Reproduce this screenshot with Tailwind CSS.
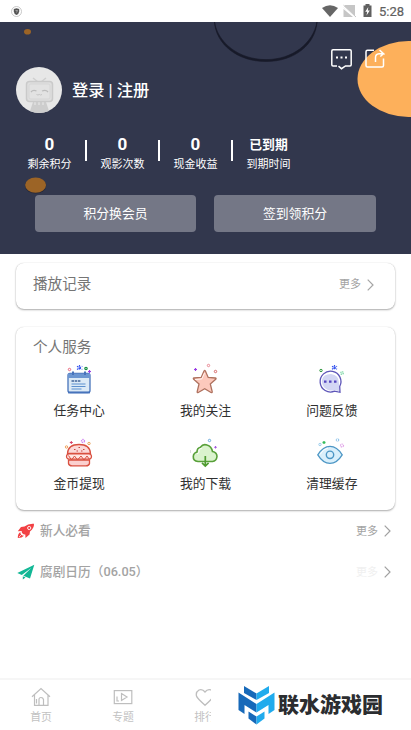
<!DOCTYPE html>
<html lang="zh-CN">
<head>
<meta charset="utf-8">
<title>我的</title>
<script src="https://cdn.jsdelivr.net/npm/@tailwindcss/browser@4"></script>
</head>
<body class="bg-white font-[Roboto,'Noto_Sans_CJK_SC',sans-serif]">
<div class="relative flex h-[730px] w-[411px] flex-col overflow-hidden bg-white">
  <!-- status bar -->
  <div class="flex h-[22px] shrink-0 items-center justify-between pl-[11px] pr-[7px]">
    <svg class="size-[11px]" viewBox="0 0 11 11"><circle cx="5.5" cy="5.5" r="5" fill="#fff" stroke="#bbb" stroke-width=".8"/><path d="M2.8 3L5.5 2.2 8.2 3V5.5Q8 8 5.5 9Q3 8 2.8 5.5Z" fill="#555"/><path d="M4.5 4.5H6.5L5.5 6.5" fill="none" stroke="#bbb" stroke-width=".7"/></svg>
    <div class="flex items-center">
      <svg class="h-[14px] w-[60px]" viewBox="0 0 60 14"><path d="M1 4Q9-1.500 17 4L9 13Z" fill="#666"/><path d="M24 1H34V12.500L22.500 3.500Z" fill="#c6c6c6"/><path d="M22.500 5V13H32Z" fill="#c6c6c6"/><path d="M22 2L35 13.500" stroke="#fff" stroke-width="1.600"/><path d="M22.500 1.200L35 13" stroke="#c6c6c6"/><path d="M42.500 1.500H44.500V0H48.500V1.500H50.500V13H42.500Z" fill="#606060"/><path d="M47.300 3L44.200 7.800H46.200L45.500 11.500L48.800 6.500H46.800Z" fill="#fff"/></svg>
      <span class="-ml-[2px] mt-[1px] text-[13px] leading-none text-[#606060] [-webkit-text-stroke:0.2px_#606060]">5:28</span>
    </div>
  </div>

  <!-- profile header -->
  <header class="relative h-[232px] shrink-0 overflow-hidden bg-[#32374d] text-white">
    <svg class="absolute inset-0 h-[232px] w-[411px]" viewBox="0 0 411 232">
      <ellipse cx="27.5" cy="9.7" rx="3.5" ry="2.8" fill="#9c6426"/>
      <path d="M214.500 0C216 22 237 39.500 266 39.500C295 39.500 315.500 22 317 0C313 21 293 37.600 266 37.600C239 37.600 218 21 214.500 0Z" fill="#171a29" stroke="#171a29" stroke-width=".6"/>
      <ellipse cx="408.500" cy="57" rx="51" ry="38" fill="#fdb05b"/>
      <ellipse cx="35.600" cy="163.700" rx="10.600" ry="7.800" fill="#252737"/>
      <ellipse cx="35.600" cy="163.100" rx="10.500" ry="7.700" fill="#9c6426"/>
    </svg>
    <div class="relative flex h-full flex-col">
      <div class="flex h-[45px] justify-end gap-[13px] pr-[26px] pt-[27px]">
        <svg class="h-[21px] w-[21px] shrink-0" viewBox="0 0 21 21" fill="none" stroke="#fff" stroke-width="1.500"><path d="M6 17H2Q.8 17 .8 15.800V2Q.8 .8 2 .8H19Q20.200 .8 20.200 2V15.800Q20.200 17 19 17H14.500L10.500 19.700L7.500 17.200"/><path d="M5 8.600H7M9.500 8.600H11.500M14 8.600H16" stroke-width="2"/></svg>
        <svg class="h-[20px] w-[20px] shrink-0" viewBox="0 0 20 20" fill="none" stroke="#fff" stroke-width="1.500"><path d="M9 1.200H2.500Q1 1.200 1 2.700V16.500Q1 18 2.500 18H17Q18.500 18 18.500 16.500V9.500"/><path d="M10.500 13V8.500Q10.500 5 14 4.700H18.500L14.500 1M18.500 4.700L15.300 7.500"/></svg>
      </div>
      <div class="flex h-[46px] shrink-0 items-center pl-[16px]">
        <svg class="size-[46px]" viewBox="0 0 46 46"><circle cx="23" cy="23" r="23" fill="#e7e7e7"/><path d="M17 35H30L33 44Q23 48 14 44Z" fill="#cdcdcd"/><path d="M19 33V38M23 33V38M27 33V38" stroke="#e7e7e7" stroke-width="1.200"/><path d="M17 11L22 15M30 11L25 15" stroke="#cfcfcf" stroke-width="1.500"/><rect x="10.500" y="14.500" width="26" height="20" rx="3" fill="#dedede" stroke="#cacaca" stroke-width="1.500"/><rect x="13" y="17" width="21" height="15" rx="2" fill="#e2e2e2" stroke="#d2d2d2" stroke-width=".6"/><path d="M15 25Q17 22.500 20.500 24M26 24Q30 22.500 32 25" fill="none" stroke="#bcbcbc" stroke-width="1.300"/><path d="M20.500 27.500Q22 28.500 23.300 27.500Q24.500 28.500 26 27.500" fill="none" stroke="#bdbdbd" stroke-width=".8"/></svg>
        <span class="ml-[10px] mt-[2px] text-[16.300px] font-medium leading-none">登录 | 注册</span>
      </div>
      <div class="flex h-[60px] shrink-0 items-start pl-[13px] pt-[21px]">
        <div class="flex w-[73px] flex-col items-center"><b class="h-[21px] text-[17px] font-bold leading-[20px]">0</b><span class="text-[11px] leading-[20px]">剩余积分</span></div>
        <div class="-ml-[1px] mr-[-1px] mt-[6px] h-[21px] w-[2px] bg-white"></div>
        <div class="flex w-[73px] flex-col items-center"><b class="h-[21px] text-[17px] font-bold leading-[20px]">0</b><span class="text-[11px] leading-[20px]">观影次数</span></div>
        <div class="-ml-[1px] mr-[-1px] mt-[6px] h-[21px] w-[2px] bg-white"></div>
        <div class="flex w-[73px] flex-col items-center"><b class="h-[21px] text-[17px] font-bold leading-[20px]">0</b><span class="text-[11px] leading-[20px]">现金收益</span></div>
        <div class="-ml-[1px] mr-[-1px] mt-[6px] h-[21px] w-[2px] bg-white"></div>
        <div class="flex w-[73px] flex-col items-center"><b class="h-[21px] text-[12.800px] font-bold leading-[22px]">已到期</b><span class="text-[11px] leading-[20px]">到期时间</span></div>
      </div>
      <div class="mt-[22px] flex gap-[18px] pl-[35px]">
        <div class="flex h-[37px] w-[161px] items-center justify-center rounded-[4px] bg-[#747786] text-[12.800px]">积分换会员</div>
        <div class="flex h-[37px] w-[162px] items-center justify-center rounded-[4px] bg-[#747786] text-[12.800px]">签到领积分</div>
      </div>
    </div>
  </header>

  <!-- history card -->
  <section class="mx-[16px] mt-[9px] flex h-[46px] shrink-0 items-center justify-between rounded-[8px] bg-white pb-[3px] pl-[17px] pr-[21px] shadow-[0_1px_2px_rgba(0,0,0,0.32),0_0_1px_rgba(0,0,0,0.2)]">
    <span class="text-[14.600px] leading-none text-[#757575]">播放记录</span>
    <span class="flex items-center gap-[6px] text-[11px] leading-none text-[#a3a3a3]">更多<svg class="h-[12px] w-[7px]" viewBox="0 0 7 12"><path d="M.7 .7L6 6L.7 11.300" fill="none" stroke="#a5a5a5" stroke-width="1.200"/></svg></span>
  </section>

  <!-- services card -->
  <section class="mx-[16px] mt-[18px] h-[183px] shrink-0 rounded-[8px] bg-white pt-[10px] shadow-[0_1px_2px_rgba(0,0,0,0.32),0_0_1px_rgba(0,0,0,0.16)]">
    <h2 class="pl-[17px] text-[14.600px] font-normal leading-[20px] text-[#757575]">个人服务</h2>
    <div class="grid grid-cols-3 text-[12.800px] leading-[22px] text-[#303030]">
      <div class="flex h-[73px] flex-col items-center pt-[6px]">
        <svg class="h-[37px] w-[32px] shrink-0" viewBox="0 0 32 37"><rect x="5" y="10.500" width="22" height="19" rx="2" fill="#dceaf6" stroke="#4773bb" stroke-width="1.300"/><path d="M5 10.500H27V15H5Z" fill="#6c96d1"/><path d="M5 29.500H27" stroke="#4773bb" stroke-width="1.800"/><path d="M10 8.500V12M22 8.500V12" stroke="#4773bb" stroke-width="2"/><path d="M8.500 18H17.500" stroke="#40659b" stroke-width="1.600" stroke-dasharray="2.500 .7"/><path d="M8.500 21H22.500M8.500 23.500H22.500M8.500 26H18.500" stroke="#5d91cf" stroke-width="1"/><circle cx="6.500" cy="6.500" r="1.200" fill="none" stroke="#e9637a"/><path d="M16.500 2V7.500M14 3.300L19.300 6.500M14 6.500L19.300 3.300" stroke="#3352ef" stroke-width="1.200" stroke-dasharray="1.800 1"/><circle cx="23" cy="5.500" r="1.200" fill="none" stroke="#189044" stroke-width="1.200"/><path d="M26.500 7V10M25 8.500H28" stroke="#9a3de4" stroke-width="1.200"/></svg><span>任务中心</span>
      </div>
      <div class="flex h-[73px] flex-col items-center pt-[6px]">
        <svg class="h-[37px] w-[32px] shrink-0" viewBox="0 0 32 37"><path d="M15 8Q15.700 7 16.400 8L19.200 14.400L26.300 15Q27.600 15.200 26.700 16.300L21.300 21L23.200 28.500Q23.400 30 22 29.500L15.700 25.800L9.300 29.500Q8 30 8.200 28.500L10 21L4.700 16.300Q3.800 15.200 5 15L12.200 14.400Z" fill="#fcc9bc" stroke="#ae715e" stroke-width="1.300"/><path d="M6 16.500L12.700 16L15.500 10" fill="none" stroke="#fff" stroke-width=".8"/><path d="M6.500 5V8M5 6.500H8" stroke="#9a3de4" stroke-width="1.200"/><circle cx="19.500" cy="2.500" r="1.200" fill="none" stroke="#e98692"/><circle cx="26.500" cy="8.500" r="1.200" fill="none" stroke="#d66565"/></svg><span>我的关注</span>
      </div>
      <div class="flex h-[73px] flex-col items-center pt-[6px]">
        <svg class="mr-[3px] h-[37px] w-[32px] shrink-0" viewBox="0 0 32 37"><path d="M25.700 23.500L26 29.300L20.500 28.200A10.400 10.400 0 1 1 25.700 23.500Z" fill="#fff" stroke="#5d55b8" stroke-width="1.300"/><path d="M25 20V28.200L20.500 27A9.400 9.400 0 0 1 8 17Q9 11 17 11Q25 12 25 20Z" fill="#d3d6f4"/><path d="M10 18.600H12.500M15 18.600H17.500M20 18.600H22.500" stroke="#5545bf" stroke-width="2.300"/><circle cx="7" cy="7.500" r="1.200" fill="none" stroke="#2a943a"/><path d="M20.500 2V7M18 3.300L23 6.200M18 6.200L23 3.300" stroke="#3352ef" stroke-width="1.200" stroke-dasharray="1.800 .7"/><circle cx="28" cy="10" r="1.300" fill="none" stroke="#7cd7a5" stroke-width="1.300" stroke-dasharray="1.200 .7"/></svg><span>问题反馈</span>
      </div>
      <div class="flex h-[73px] flex-col items-center pt-[6px]">
        <svg class="h-[37px] w-[32px] shrink-0" viewBox="0 0 32 37"><path d="M4.500 17.500Q5 8.500 16 8.500T27.500 17.500Z" fill="#fbd9d8" stroke="#d95040" stroke-width="1.300"/><rect x="3.500" y="18" width="25" height="5" rx="2.500" fill="#ffe5e2" stroke="#d95040" stroke-width="1.200"/><path d="M5.500 24V27.500Q6 29.800 9 29.800H23Q26 29.800 26.500 27.500V24Z" fill="#fbd0cf" stroke="#d95040" stroke-width="1.300"/><path d="M5.500 19.500L8.500 24L11.500 20L14.500 24L18 20L21 24L24 20L26.500 23.500" fill="none" stroke="#d95040"/><path d="M11 13.500H12.500M15.500 11.500H17M20 13.500H21.500M13.500 15H15M18 15H19.500" stroke="#c94942" stroke-width="1.100"/><circle cx="3.500" cy="11" r="1.200" fill="none" stroke="#f0a25b"/><path d="M8.300 5V8M6.800 6.500H9.800" stroke="#d74169"/><circle cx="20" cy="5" r="1.500" fill="none" stroke="#d28af0" stroke-width="1.300" stroke-dasharray="1.300 .6"/><circle cx="26" cy="7.500" r="1.200" fill="none" stroke="#eaa55f"/></svg><span>金币提现</span>
      </div>
      <div class="flex h-[73px] flex-col items-center pt-[6px]">
        <svg class="h-[37px] w-[32px] shrink-0" viewBox="0 0 32 37"><path d="M9 25.500Q4 25 4.300 20.500Q4.500 17 8 16Q8 12 11.500 11.300Q14 7.500 18 9Q22.500 10.300 23.500 15.500Q28 16.500 28 20.500Q27.500 25 23.500 25.500Z" fill="#daf3cd" stroke="#58a039" stroke-width="1.600"/><path d="M8 18L10 16.500V13.500L13 12" fill="none" stroke="#fff"/><path d="M16.300 20V29.500M13 26.800L16.300 30L19.600 26.800" fill="none" stroke="#4f9c30" stroke-width="1.700"/><circle cx="20.500" cy="4.500" r="1.200" fill="none" stroke="#66a9dc"/><path d="M26.500 10V12.500M25.200 11.300H27.800" stroke="#a45ae0"/><path d="M1.500 14V17" stroke="#dedede"/></svg><span>我的下载</span>
      </div>
      <div class="flex h-[73px] flex-col items-center pt-[6px]">
        <svg class="mr-[3px] h-[37px] w-[32px] shrink-0" viewBox="0 0 32 37"><path d="M3.800 18.800Q9 10.300 16 10.300T28.200 18.800Q23 27.300 16 27.300T3.800 18.800Z" fill="#d9effb" stroke="#4c96c5" stroke-width="1.300"/><path d="M6 18.500Q9 13 14 12" fill="none" stroke="#fff"/><circle cx="16" cy="18.800" r="3.700" fill="#d9effb" stroke="#4c96c5" stroke-width="1.400"/><circle cx="6" cy="8.500" r="1.200" fill="none" stroke="#9bceed"/><path d="M10 5V8M8.500 6.500H11.500" stroke="#33bc5c" stroke-width="1.300"/><circle cx="23.500" cy="4" r="1.300" fill="none" stroke="#74b6e7" stroke-dasharray="1.400 .6"/><circle cx="28" cy="9.500" r="1.500" fill="none" stroke="#e0a0e8" stroke-width="1.200" stroke-dasharray="1.400 .6"/></svg><span>清理缓存</span>
      </div>
    </div>
  </section>

  <!-- list rows -->
  <div class="flex h-[41px] shrink-0 items-center pl-[17px] pr-[20px]">
    <svg class="h-[16px] w-[18px]" viewBox="0 0 18 16"><path d="M17 .8Q11 .4 7.500 3.500L4 4L.8 8.200L4.700 8Q4.500 9.500 5.300 10.200Q6.500 11.700 8.300 11.500L8.500 15L12.500 11.500L13 8.500Q17.300 5 17 .8Z" fill="#f24144"/><circle cx="12.200" cy="5" r="1.600" fill="#f24144" stroke="#fff" stroke-width=".9"/><path d="M3.200 9Q.6 11 .8 15Q5 15 7 12.700Q3.500 12.500 3.200 9Z" fill="#f24144"/><path d="M2 14L4.500 11.500" stroke="#fff" stroke-width=".7"/></svg>
    <span class="ml-[5px] mt-[2px] text-[12.700px] font-medium leading-none text-[#a3a3a3]">新人必看</span>
    <span class="ml-auto flex items-center gap-[6px] text-[11px] leading-none text-[#a3a3a3]"><span class="mt-[1px]">更多</span><svg class="h-[12px] w-[7px]" viewBox="0 0 7 12"><path d="M.7 .7L6 6L.7 11.300" fill="none" stroke="#a0a0a0" stroke-width="1.200"/></svg></span>
  </div>
  <div class="flex h-[41px] shrink-0 items-center pl-[17px] pr-[20px]">
    <svg class="h-[16px] w-[18px]" viewBox="0 0 18 16"><path d="M17.300 .8L.3 9L4.800 11L14.500 3.700L6.300 11.700L13 14.500Z" fill="#12b795"/><path d="M5.800 12.300V15.500L8.500 13.400Z" fill="#12b795"/></svg>
    <span class="ml-[5px] mt-[2px] text-[12.700px] font-medium leading-none text-[#a3a3a3]">腐剧日历（06.05）</span>
    <span class="ml-auto flex items-center gap-[6px] text-[11px] leading-none text-[#f0f0f0]"><span class="mt-[1px]">更多</span><svg class="h-[12px] w-[7px]" viewBox="0 0 7 12"><path d="M.7 .7L6 6L.7 11.300" fill="none" stroke="#a0a0a0" stroke-width="1.200"/></svg></span>
  </div>

  <!-- bottom navigation -->
  <nav class="mt-auto flex h-[52px] shrink-0 border-t-2 border-[#f6f6f6] bg-white text-[10.800px] leading-[14px] text-[#c2c2c2]">
    <div class="flex w-[82px] flex-col items-center pt-[7px]">
      <svg class="h-[20px] w-[20px]" viewBox="0 0 20 20" fill="none" stroke="#bebebe" stroke-width="1.200"><path d="M1 9.700L10 1.500L19 9.700M3.500 8V18.300H17V8"/><path d="M8 18V12.500Q8 10.500 10 10.500T12.500 12.500V18M5.500 12V16.500"/></svg><span class="mt-[4px]">首页</span>
    </div>
    <div class="flex w-[82px] flex-col items-center pt-[7px]">
      <svg class="h-[20px] w-[20px]" viewBox="0 0 20 20" fill="none" stroke="#bebebe" stroke-width="1.200"><rect x="1.300" y="3.600" width="17.500" height="13"/><path d="M8.500 6.500L14 10L8.500 13.500ZM4 9.500V14H6"/></svg><span class="mt-[4px]">专题</span>
    </div>
    <div class="w-[47px] overflow-hidden">
      <div class="flex w-[82px] flex-col items-center pt-[7px]">
        <svg class="h-[20px] w-[20px]" viewBox="0 0 20 20" fill="none" stroke="#bebebe" stroke-width="1.300"><path d="M10 5Q7.500 1.700 4 3Q.5 5 1.500 9Q2 11 10 18.300Q18 11 18.500 9Q19.500 5 16 3Q12.500 1.700 10 5Z"/></svg><span class="mt-[4px]">排行</span>
      </div>
    </div>
    <div class="flex h-[50px] flex-1 items-center pl-[27px]">
      <svg class="h-[40px] w-[37px] shrink-0" viewBox="0 0 37 40"><path d="M6 1L18.500 8.500V15L6 8Z" fill="#1769b9"/><path d="M31 1L18.500 8.500V15L31 8Z" fill="#20abed"/><path d="M.5 7.500L18.500 19V27.500L6.500 20V29L.5 25Z" fill="#1769b9"/><path d="M36.500 7.500L18.500 19V27.500L30.500 20V29L36.500 25Z" fill="#20abed"/><path d="M10.500 26.500L18.500 31.500V39.500L10.500 33.500Z" fill="#1769b9"/><path d="M26.500 26.500L18.500 31.500V39.500L26.500 33.500Z" fill="#20abed"/></svg>
      <span class="ml-[3px] mt-[1px] whitespace-nowrap text-[21px] font-black leading-none text-[#2b2d30]">联水游戏园</span>
    </div>
  </nav>
</div>
</body>
</html>
